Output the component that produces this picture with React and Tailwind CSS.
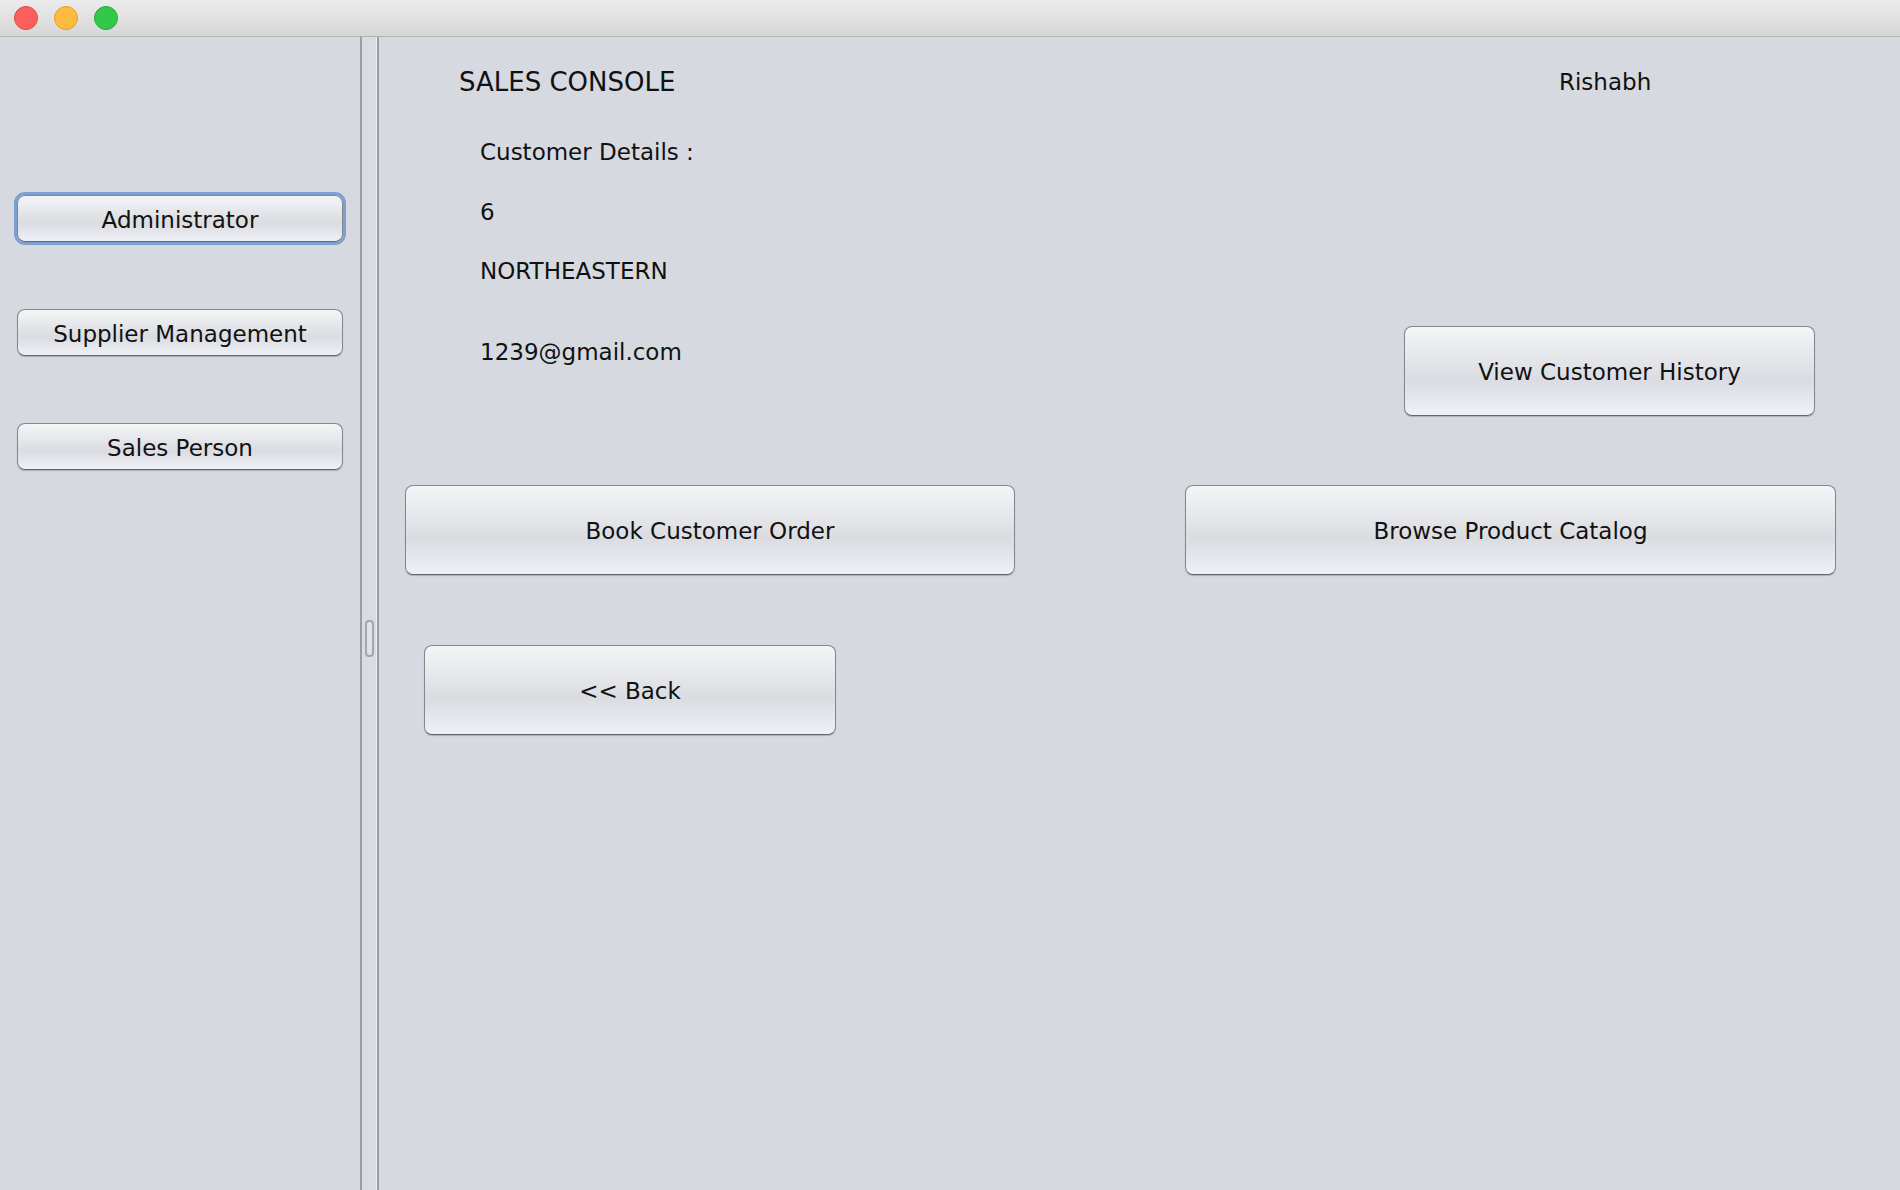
import React from "react";

const font = { fontFamily: '"DejaVu Sans", "Liberation Sans", sans-serif' };

function AquaButton({ className = "", children, focused = false }) {
  return (
    <div
      className={
        "flex items-center justify-center rounded-[8px] border-[1.5px] border-[#86878c] border-b-[#66676c] bg-gradient-to-b from-[#f4f5f7] via-[#dadce1] via-60% to-[#eff1f8] text-[23px] text-[#111] shadow-[0_1px_1px_rgba(0,0,0,0.2)] " +
        (focused ? "outline outline-[3px] outline-offset-0 outline-[#7ca1d0] " : "") +
        className
      }
    >
      {children}
    </div>
  );
}

export default function App() {
  return (
    <div className="w-[1900px] h-[1190px] bg-[#d6d9e0] flex flex-col overflow-hidden" style={font}>
      {/* Title bar */}
      <div className="h-[37px] shrink-0 bg-gradient-to-b from-[#ececec] to-[#d6d6d6] border-b border-[#b3b3b3] flex items-center pl-[14px] gap-[16px]">
        <div className="w-[24px] h-[24px] rounded-full bg-[#fc605c] border border-[#de4a44]" />
        <div className="w-[24px] h-[24px] rounded-full bg-[#fdbc40] border border-[#dea123]" />
        <div className="w-[24px] h-[24px] rounded-full bg-[#34c84a] border border-[#27a83a]" />
      </div>

      <div className="flex flex-1">
        {/* Left panel */}
        <div className="w-[360px] shrink-0 flex flex-col pl-[17px] pt-[158px] gap-[67px]">
          <AquaButton focused className="w-[326px] h-[47px] pt-[3px]">Administrator</AquaButton>
          <AquaButton className="w-[326px] h-[47px] pt-[3px]">Supplier Management</AquaButton>
          <AquaButton className="w-[326px] h-[47px] pt-[3px]">Sales Person</AquaButton>
        </div>

        {/* Divider */}
        <div className="w-[19px] shrink-0 flex">
          <div className="w-[2px] bg-[#9a9ca3]" />
          <div className="flex-1 bg-[#d9dce2] flex flex-col items-center justify-center pt-[49px]">
            <div className="w-[9px] h-[37px] rounded-[4px] border-2 border-[#a3a6ad] bg-[#dfe2e7]" />
          </div>
          <div className="w-[1px] bg-[#eef0f4]" />
          <div className="w-[2px] bg-[#9a9ca3]" />
        </div>

        {/* Right panel */}
        <div className="flex-1 flex flex-col">
          <div className="mt-[29px] h-[32px] flex items-center">
            <div className="w-[1180px] pl-[80px] text-[26px] text-[#111]">SALES CONSOLE</div>
            <div className="text-[23px] text-[#111]">Rishabh</div>
          </div>

          <div className="mt-[39px] flex">
            <div className="w-[1025px] pl-[101px] flex flex-col text-[23px] text-[#111]">
              <div className="h-[30px] flex items-center">Customer Details :</div>
              <div className="mt-[30px] h-[30px] flex items-center">6</div>
              <div className="mt-[29px] h-[30px] flex items-center">NORTHEASTERN</div>
              <div className="mt-[51px] h-[30px] flex items-center">1239@gmail.com</div>
            </div>
            <AquaButton className="mt-[189px] w-[411px] h-[90px] pt-[2px]">View Customer History</AquaButton>
          </div>

          <div className="mt-[69px] flex pl-[26px] gap-[170px]">
            <AquaButton className="w-[610px] h-[90px] pt-[2px]">Book Customer Order</AquaButton>
            <AquaButton className="w-[651px] h-[90px] pt-[2px]">Browse Product Catalog</AquaButton>
          </div>

          <div className="mt-[70px] flex pl-[45px]">
            <AquaButton className="w-[412px] h-[90px] pt-[2px]">&lt;&lt; Back</AquaButton>
          </div>
        </div>
      </div>
    </div>
  );
}
